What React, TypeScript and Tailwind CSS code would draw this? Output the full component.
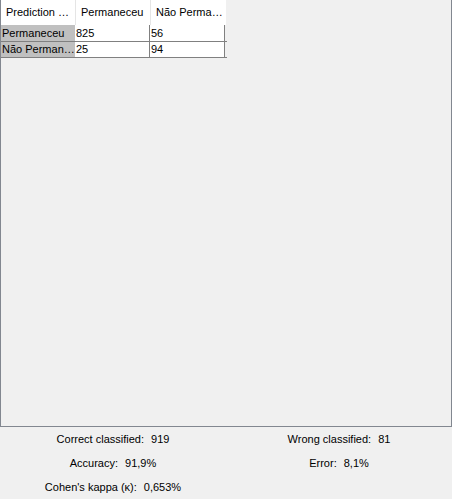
import React from "react";

const font = { fontFamily: '"Liberation Sans", Arial, sans-serif' };

export default function App() {
  const rows = [
    ["Permaneceu", "825", "56"],
    ["Não Perman…", "25", "94"],
  ];
  return (
    <div className="w-[452px] h-[499px] bg-[#f0f0f0] flex flex-col text-[11px] text-black" style={font}>
      <div className="h-[427px] border border-t-0 border-[#828790] bg-[#f0f0f0] flex flex-col">
        <div className="flex flex-col w-[226px]">
          <div className="flex h-[25px] bg-white w-[225px]">
            {["Prediction …", "Permaneceu", "Não Perma…"].map((h, i) => (
              <div key={i} className={`w-[75px] flex items-center pl-[5px] ${i < 2 ? "border-r border-[#e5e5e5]" : ""}`}>
                {h}
              </div>
            ))}
          </div>
          {rows.map((r, ri) => (
            <div key={ri} className={`flex ${ri === 0 ? "h-[17px]" : "h-[16px]"} border-b border-[#808080] w-[226px]`}>
              {r.map((c, ci) => (
                <div
                  key={ci}
                  className={`flex items-center pl-[1px] leading-none ${ci === 0 ? "bg-[#c0c0c0] w-[74px]" : "bg-white w-[75px] border-r border-[#808080]"}`}
                >
                  {c}
                </div>
              ))}
            </div>
          ))}
        </div>
      </div>
      <div className="flex-1 grid grid-cols-2 grid-rows-3 text-[11px]">
        <div className="flex items-center justify-center gap-[7px]"><span>Correct classified:</span><span>919</span></div>
        <div className="flex items-center justify-center gap-[7px]"><span>Wrong classified:</span><span>81</span></div>
        <div className="flex items-center justify-center gap-[7px]"><span>Accuracy:</span><span>91,9%</span></div>
        <div className="flex items-center justify-center gap-[7px]"><span>Error:</span><span>8,1%</span></div>
        <div className="flex items-center justify-center gap-[7px]"><span>Cohen's kappa (κ):</span><span>0,653%</span></div>
        <div></div>
      </div>
    </div>
  );
}
